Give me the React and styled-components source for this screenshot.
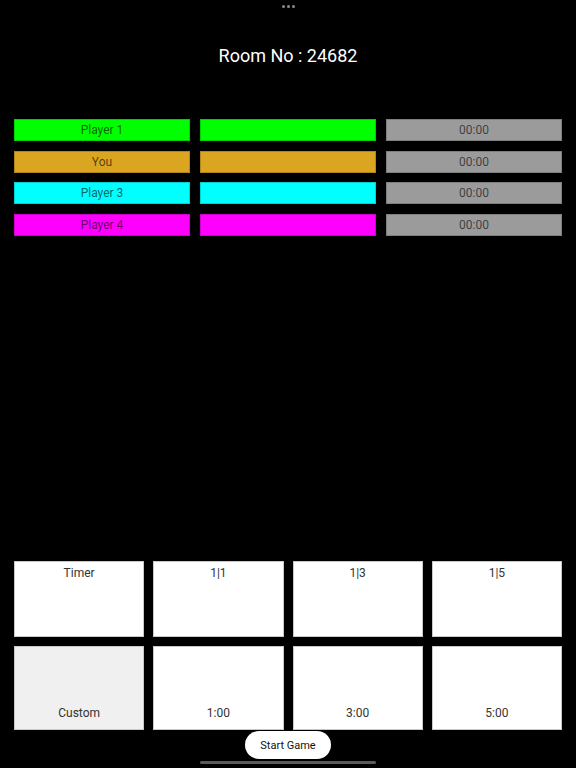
import React from 'react';
import styled, { createGlobalStyle } from 'styled-components';

const GlobalStyle = createGlobalStyle`
  html, body {
    margin: 0;
    padding: 0;
    background: #000000;
  }
  body {
    font-family: Roboto, "Liberation Sans", Arial, sans-serif;
  }
`;

const Screen = styled.div`
  position: relative;
  width: 576px;
  height: 768px;
  background: #000000;
  display: flex;
  flex-direction: column;
  overflow: hidden;
`;

const Dots = styled.div`
  display: flex;
  justify-content: center;
  gap: 2px;
  padding-top: 5px;
  height: 3px;
`;

const Dot = styled.span`
  width: 3px;
  height: 3px;
  border-radius: 50%;
  background: #8a8a8a;
`;

const Title = styled.h1`
  margin: 37px 0 0;
  text-align: center;
  color: #ffffff;
  font-size: 18px;
  font-weight: 400;
  line-height: 22px;
`;

const Players = styled.div`
  display: flex;
  flex-direction: column;
  gap: 9.5px;
  margin-top: 52px;
  padding: 0 14px;
`;

const PlayerRow = styled.div`
  display: grid;
  grid-template-columns: repeat(3, 1fr);
  gap: 10px;
`;

const Cell = styled.div`
  height: 22px;
  box-sizing: border-box;
  background: ${(p) => p.$bg};
  border: 1px solid rgba(0, 0, 0, 0.18);
  display: flex;
  align-items: center;
  justify-content: center;
  font-size: 12px;
  color: rgba(0, 0, 0, 0.62);
`;

const Spacer = styled.div`
  flex: 1;
`;

const TimerGrid = styled.div`
  display: grid;
  grid-template-columns: repeat(4, 1fr);
  grid-template-rows: 76px 84px;
  gap: 9px;
  padding: 0 14px;
`;

const Tile = styled.div`
  box-sizing: border-box;
  background: ${(p) => (p.$muted ? '#f0f0f0' : '#ffffff')};
  border: 1px solid #c8c8c8;
  display: flex;
  flex-direction: column;
  align-items: center;
  justify-content: ${(p) => (p.$bottom ? 'flex-end' : 'flex-start')};
  padding: ${(p) => (p.$bottom ? '0 0 9px' : '4px 0 0')};
  font-size: 12px;
  color: #333333;
  line-height: 14px;
`;

const Footer = styled.div`
  display: flex;
  flex-direction: column;
  align-items: center;
  height: 38px;
`;

const StartButton = styled.button`
  margin-top: 1px;
  height: 28px;
  padding: 0 15px;
  border: none;
  border-radius: 14px;
  background: #ffffff;
  color: #111111;
  font-family: Roboto, "Liberation Sans", Arial, sans-serif;
  font-size: 11px;
`;

const HomeBar = styled.div`
  margin-top: 2px;
  width: 176px;
  height: 3px;
  border-radius: 2px;
  background: #5a5a5a;
`;

const players = [
  { name: 'Player 1', color: '#00ff00' },
  { name: 'You', color: '#daa520' },
  { name: 'Player 3', color: '#00ffff' },
  { name: 'Player 4', color: '#ff00ff' },
];

const topTiles = ['Timer', '1|1', '1|3', '1|5'];
const bottomTiles = ['Custom', '1:00', '3:00', '5:00'];

export default function App() {
  return (
    <>
      <GlobalStyle />
      <Screen>
        <Dots>
          <Dot />
          <Dot />
          <Dot />
        </Dots>
        <Title>Room No : 24682</Title>
        <Players>
          {players.map((p) => (
            <PlayerRow key={p.name}>
              <Cell $bg={p.color}>{p.name}</Cell>
              <Cell $bg={p.color} />
              <Cell $bg="#9b9b9b">00:00</Cell>
            </PlayerRow>
          ))}
        </Players>
        <Spacer />
        <TimerGrid>
          {topTiles.map((t) => (
            <Tile key={t}>{t}</Tile>
          ))}
          {bottomTiles.map((t, i) => (
            <Tile key={t} $bottom $muted={i === 0}>
              {t}
            </Tile>
          ))}
        </TimerGrid>
        <Footer>
          <StartButton>Start Game</StartButton>
          <HomeBar />
        </Footer>
      </Screen>
    </>
  );
}
